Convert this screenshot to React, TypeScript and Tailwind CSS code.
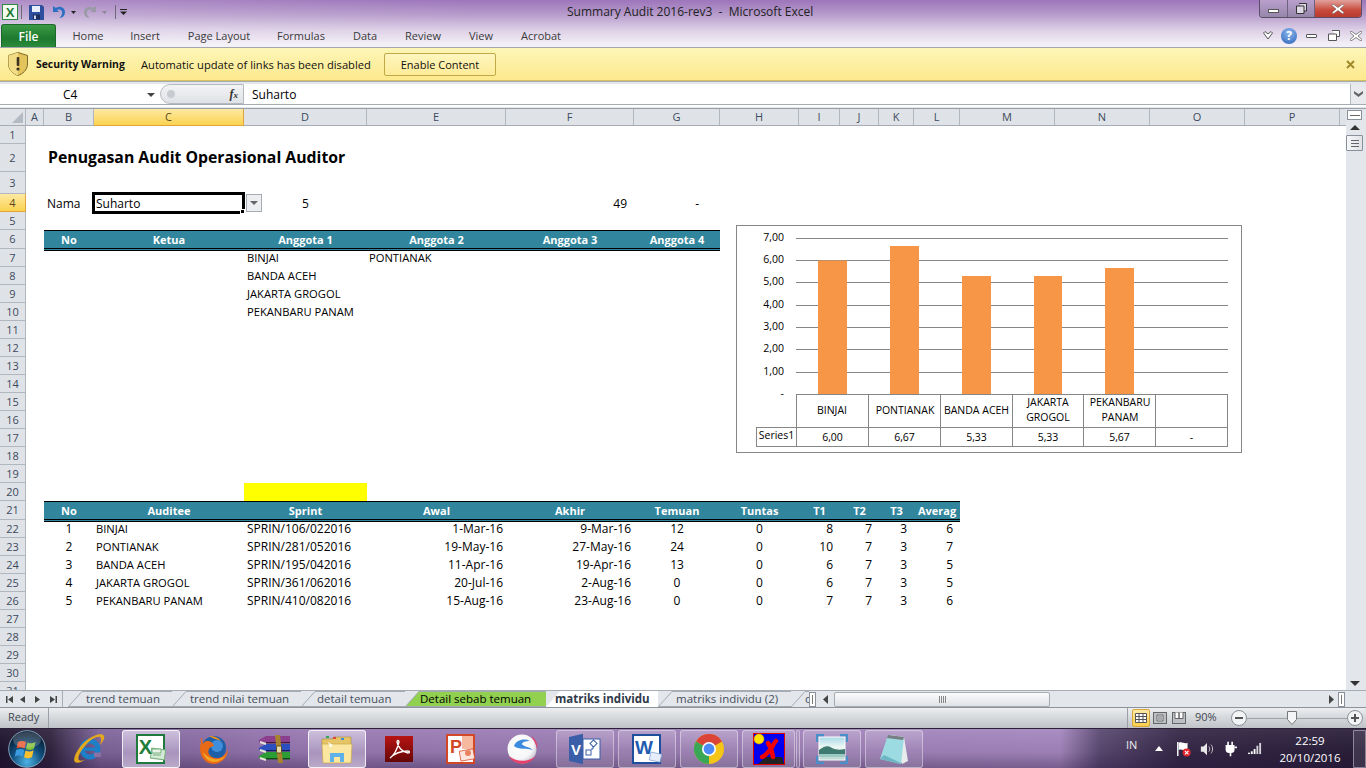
import React from "react";

const COLS = [
  { n: "A", w: "w-[18px]" }, { n: "B", w: "w-[50px]" }, { n: "C", w: "w-[150px]" }, { n: "D", w: "w-[123px]" },
  { n: "E", w: "w-[139px]" }, { n: "F", w: "w-[128px]" }, { n: "G", w: "w-[86px]" }, { n: "H", w: "w-[79px]" },
  { n: "I", w: "w-[41px]" }, { n: "J", w: "w-[39px]" }, { n: "K", w: "w-[35px]" }, { n: "L", w: "w-[46px]" },
  { n: "M", w: "w-[95px]" }, { n: "N", w: "w-[95px]" }, { n: "O", w: "w-[95px]" }, { n: "P", w: "w-[95px]" },
];

type C = { t?: string; a?: "l" | "c" | "r"; x?: string; z?: string };
type R = { n: number; h: string; cells?: Record<string, C>; head?: boolean };

const CAPS = "text-[11.2px]";
const H = (t: string): C => ({ t, a: "c", x: "font-bold text-white", z: "text-[11px]" });
const audit = (
  no: string, name: string, sp: string, aw: string, ak: string, te: string, t1: string, t2: string, t3: string, av: string
): Record<string, C> => ({
  B: { t: no, a: "c" },
  C: { t: name, x: "pl-[2px]", z: CAPS },
  D: { t: sp, x: "pl-[3px]" },
  E: { t: aw, a: "r", x: "pr-[3px]" },
  F: { t: ak, a: "r", x: "pr-[3px]" },
  G: { t: te, a: "c" },
  H: { t: "0", a: "c" },
  I: { t: t1, a: "r", x: "pr-[7px]" },
  J: { t: t2, a: "r", x: "pr-[7px]" },
  K: { t: t3, a: "r", x: "pr-[7px]" },
  L: { t: av, a: "r", x: "pr-[7px]" },
});

const ROWS: R[] = [
  { n: 1, h: "h-[18px]" },
  { n: 2, h: "h-[28px]", cells: { B: { t: "Penugasan Audit Operasional Auditor", x: "pl-[4px] font-bold", z: "text-[15.8px]" } } },
  { n: 3, h: "h-[22px]" },
  { n: 4, h: "h-[18px]", cells: {
    B: { t: "Nama", x: "pl-[3px] pt-px" },
    D: { t: "5", a: "c", x: "pt-px" },
    F: { t: "49", a: "r", x: "pr-[7px] pt-px" },
    G: { t: "-", a: "r", x: "pr-[21px] pt-px" },
  } },
  { n: 5, h: "h-[18px]" },
  { n: 6, h: "h-[19px]", head: true, cells: {
    B: H("No"), C: H("Ketua"), D: H("Anggota 1"), E: H("Anggota 2"), F: H("Anggota 3"), G: H("Anggota 4"),
  } },
  { n: 7, h: "h-[18px]", cells: { D: { t: "BINJAI", x: "pl-[3px] pt-px", z: CAPS }, E: { t: "PONTIANAK", x: "pl-[2px] pt-px", z: CAPS } } },
  { n: 8, h: "h-[18px]", cells: { D: { t: "BANDA ACEH", x: "pl-[3px] pt-px", z: CAPS } } },
  { n: 9, h: "h-[18px]", cells: { D: { t: "JAKARTA GROGOL", x: "pl-[3px] pt-px", z: CAPS } } },
  { n: 10, h: "h-[18px]", cells: { D: { t: "PEKANBARU PANAM", x: "pl-[3px] pt-px", z: CAPS } } },
  ...[11, 12, 13, 14, 15, 16, 17, 18, 19].map((n) => ({ n, h: "h-[18px]" })),
  { n: 20, h: "h-[18px]", cells: { D: { x: "bg-[#ffff00] self-stretch" } } },
  { n: 21, h: "h-[19px]", head: true, cells: {
    B: H("No"), C: H("Auditee"), D: H("Sprint"), E: H("Awal"), F: H("Akhir"), G: H("Temuan"), H: H("Tuntas"),
    I: H("T1"), J: H("T2"), K: H("T3"), L: H("Averag"),
  } },
  { n: 22, h: "h-[18px]", cells: audit("1", "BINJAI", "SPRIN/106/022016", "1-Mar-16", "9-Mar-16", "12", "8", "7", "3", "6") },
  { n: 23, h: "h-[18px]", cells: audit("2", "PONTIANAK", "SPRIN/281/052016", "19-May-16", "27-May-16", "24", "10", "7", "3", "7") },
  { n: 24, h: "h-[18px]", cells: audit("3", "BANDA ACEH", "SPRIN/195/042016", "11-Apr-16", "19-Apr-16", "13", "6", "7", "3", "5") },
  { n: 25, h: "h-[18px]", cells: audit("4", "JAKARTA GROGOL", "SPRIN/361/062016", "20-Jul-16", "2-Aug-16", "0", "6", "7", "3", "5") },
  { n: 26, h: "h-[18px]", cells: audit("5", "PEKANBARU PANAM", "SPRIN/410/082016", "15-Aug-16", "23-Aug-16", "0", "7", "7", "3", "6") },
  ...[27, 28, 29, 30, 31].map((n) => ({ n, h: "h-[18px]" })),
];

function Row({ r }: { r: R }) {
  const sel = r.n === 4;
  return (
    <div className={`flex ${r.h} shrink-0 overflow-visible`}>
      <div
        className={`w-[26px] shrink-0 flex items-center justify-center pt-px border-b border-r text-[11px] ${
          sel
            ? "bg-[linear-gradient(#fde9a4,#fbd350)] border-[#e2a33b] text-[#5a4a20]"
            : "bg-[#dfe3e8] border-[#b1b7bf] text-[#3d4a5c]"
        }`}
      >
        {r.n}
      </div>
      {COLS.map((c) => {
        const cell = r.cells?.[c.n];
        const teal = r.head && cell;
        const align = cell?.a === "c" ? "justify-center" : cell?.a === "r" ? "justify-end" : "justify-start";
        return (
          <div
            key={c.n}
            className={`${c.w} shrink-0 flex ${align} whitespace-nowrap text-black ${cell?.z ?? "text-[12px]"} ${
              teal
                ? "h-[21px] pt-px bg-[#31859c] border-t border-black border-b-[3px] border-b-black border-double items-start relative z-[1] overflow-hidden"
                : "items-center"
            } ${cell?.x ?? ""}`}
          >
            {cell?.t}
          </div>
        );
      })}
    </div>
  );
}

function Chart() {
  const grid = [238.5, 260.5, 282.5, 305.5, 327.5, 349.5, 372.5, 394.5];
  const labels = ["7,00", "6,00", "5,00", "4,00", "3,00", "2,00", "1,00", "-"];
  const bars = [
    [818, 29, 260.5], [890, 29, 246], [962, 29, 276], [1034, 28, 276], [1105, 29, 268],
  ];
  const xs = [796.5, 868.5, 940.5, 1012.5, 1083.5, 1155.5, 1227.5];
  const vals = ["6,00", "6,67", "5,33", "5,33", "5,67", "-"];
  const ff = "'Open Sans', sans-serif";
  return (
    <svg
      className="absolute left-[736px] top-[116px] z-10 bg-white"
      width="506"
      height="228"
      viewBox="736 225 506 228"
      fontFamily={ff}
    >
      <rect x="736.5" y="225.5" width="505" height="227" fill="#fff" stroke="#868686" />
      {grid.map((y) => (
        <line key={y} x1="796" x2="1228" y1={y} y2={y} stroke="#868686" />
      ))}
      {labels.map((l, i) => (
        <text key={l} x="784" y={grid[i] + 2.5} fontSize="10.5" textAnchor="end" fill="#000">
          {l}
        </text>
      ))}
      {bars.map(([x, w, t]) => (
        <rect key={x} x={x} y={t} width={w} height={394 - t} fill="#f79646" />
      ))}
      <g stroke="#868686" fill="none">
        <line x1="796" x2="1228" y1="427.5" y2="427.5" />
        <line x1="796" x2="1228" y1="394.5" y2="394.5" />
        <line x1="757" x2="1228" y1="446.5" y2="446.5" />
        <line x1="757" x2="796" y1="427.5" y2="427.5" />
        <line x1="756.5" x2="756.5" y1="427" y2="447" />
        {xs.map((x) => (
          <line key={x} x1={x} x2={x} y1="394" y2="447" />
        ))}
      </g>
      <g fontSize="10.5" textAnchor="middle" fill="#000">
        <text x="832" y="414">BINJAI</text>
        <text x="905" y="414">PONTIANAK</text>
        <text x="976.5" y="414">BANDA ACEH</text>
        <text x="1048" y="406">JAKARTA</text>
        <text x="1048" y="421">GROGOL</text>
        <text x="1120" y="406">PEKANBARU</text>
        <text x="1120" y="421">PANAM</text>
        <text x="776.5" y="439">Series1</text>
        {vals.map((v, i) => (
          <text key={i} x={(xs[i] + xs[i + 1]) / 2} y="441">
            {v}
          </text>
        ))}
      </g>
    </svg>
  );
}

const Orb = () => (
  <svg width="38" height="38" viewBox="0 0 38 38">
    <defs>
      <radialGradient id="orb" cx="50%" cy="85%" r="75%">
        <stop offset="0" stopColor="#4fb4e6" />
        <stop offset="0.55" stopColor="#10507e" />
        <stop offset="1" stopColor="#071c33" />
      </radialGradient>
    </defs>
    <circle cx="19" cy="19" r="18.3" fill="url(#orb)" stroke="#9fc0d8" strokeWidth="0.8" />
    <path d="M10 12q4-2 8 0l-1.4 6.6q-4-2-8 0z" fill="#e8502a" />
    <path d="M19.5 12.4q4 2 8-.4l-1.5 6.8q-4 2.4-8 .3z" fill="#7fbf35" />
    <path d="M8.2 20q4-2 8 0l-1.4 6.6q-4-2-8 0z" fill="#3b9be0" />
    <path d="M17.6 20.5q4 2 8-.3L24 27q-4 2.3-8 .2z" fill="#fbc02d" />
    <ellipse cx="19" cy="10" rx="14" ry="8" fill="#fff" opacity="0.2" />
  </svg>
);
const IE = () => (
  <svg width="34" height="34" viewBox="0 0 34 34">
    <circle cx="18" cy="17" r="8" fill="none" stroke="#1c7fc8" strokeWidth="5" />
    <rect x="11" y="15.5" width="15" height="3.4" fill="#1c7fc8" />
    <path d="M22 20.5h7v4.500h-7z" fill="#8a70a5" />
    <path d="M3 30C0 27 6 15 15 8 23 2 31 1 32 4c1 2-1 6-4 9 1-3 2-7 0-8-3-1-9 2-14 8C9 18 5 25 7 28c1 1 4 1 7-1-4 3-9 5-11 3z" fill="#e3a81c" />
  </svg>
);
const XL = () => (
  <svg width="30" height="30" viewBox="0 0 30 30">
    <rect x="1" y="1" width="27" height="28" fill="#fff" stroke="#1e7a3c" strokeWidth="2" />
    <rect x="15" y="15" width="14" height="10" fill="#d5ead6" stroke="#7ab07f" strokeWidth="1" transform="rotate(8 22 20)" />
    <text x="9.5" y="20" textAnchor="middle" fontSize="20" fontWeight="700" fill="#1f7d3b" fontFamily="'Liberation Sans',sans-serif">X</text>
    <path d="M16 15h9v4h-9zM17 21h8" stroke="#7ab07f" strokeWidth="1" fill="#e8f3e8" />
  </svg>
);
const FF = () => (
  <svg width="32" height="32" viewBox="0 0 32 32">
    <circle cx="17" cy="15" r="12" fill="#1f5fa8" />
    <circle cx="20" cy="13" r="6" fill="#3e8edb" />
    <path d="M4 10C1 18 5 30 16 31c9 0 15-7 15-15-2 6-7 10-13 9-5-1-8-5-6-9 1-2 3-3 5-3-1-3-3-5-7-5-2 0-3 1-4 3C6 10 5 7 5 5 3 6 4 8 4 10z" fill="#e86a17" />
    <path d="M6 19c1 6 6 10 11 10 5 0 10-3 12-7-3 3-7 5-12 4-5-1-9-4-11-7z" fill="#f6a623" />
    <path d="M12 3c4 0 9 1 12 5-4-2-8-2-12-5z" fill="#f28f1c" />
  </svg>
);
const RAR = () => (
  <svg width="32" height="28" viewBox="0 0 32 28">
    <path d="M0 5l7-4h24v7H7L0 8z" fill="#8c3f8e" />
    <path d="M0 13l7-4h24v7H7l-7-1z" fill="#2b4fc0" />
    <path d="M0 21l7-4h24v7H7l-7-1z" fill="#2c9c34" />
    <path d="M1 7l6 2M1 15l6 2M1 23l6 2" stroke="#e8e4d8" strokeWidth="2" />
    <rect x="7" y="7" width="24" height="1.4" fill="#3e1c40" />
    <rect x="7" y="15" width="24" height="1.4" fill="#10205c" />
    <rect x="7" y="23" width="24" height="1.4" fill="#0e4a14" />
    <path d="M16 0h5l3 28h-5z" fill="#a9822d" />
    <rect x="17.5" y="11" width="5" height="7" rx="1" fill="#e6d9a8" stroke="#4a3a10" strokeWidth="0.8" />
  </svg>
);
const Folder = () => (
  <svg width="32" height="30" viewBox="0 0 32 30">
    <path d="M1 5h10l2-2h17v8H1z" fill="#e7c566" stroke="#a98f3d" strokeWidth="0.6" />
    <rect x="5" y="2" width="3" height="2" fill="#3aa655" />
    <rect x="12" y="3" width="3" height="2" fill="#d9483b" />
    <rect x="20" y="4" width="3" height="2" fill="#3c8ed8" />
    <path d="M1 10h30l-1 19H2z" fill="#fbe7a0" stroke="#c9a94e" strokeWidth="0.7" />
    <path d="M9 28V19h14v9h-4v-5h-6v5z" fill="#5fb1e8" />
    <path d="M7 8l2 6 3-3-5-3z" fill="#fff" opacity="0.8" />
  </svg>
);
const PDF = () => (
  <svg width="28" height="26" viewBox="0 0 28 26">
    <defs>
      <linearGradient id="pdf" x1="0" y1="0" x2="0" y2="1">
        <stop offset="0" stopColor="#b81414" />
        <stop offset="1" stopColor="#650707" />
      </linearGradient>
    </defs>
    <rect width="28" height="26" fill="url(#pdf)" />
    <path d="M5 22c3-2 7-8 9-16 0-2-2-2-2 0 1 5 5 10 11 11 2 0 2-2 0-2-6 0-13 2-18 7z" fill="none" stroke="#fff" strokeWidth="1.3" />
  </svg>
);
const PPT = () => (
  <svg width="30" height="30" viewBox="0 0 30 30">
    <rect x="1" y="1" width="27" height="28" fill="#fff" stroke="#d24726" strokeWidth="2" />
    <rect x="16" y="2" width="11" height="13" fill="#f7b8a0" />
    <text x="10" y="19" textAnchor="middle" fontSize="18" fontWeight="700" fill="#d24726" fontFamily="'Liberation Sans',sans-serif">P</text>
    <rect x="14" y="16" width="14" height="10" fill="#fbe5dc" stroke="#d24726" strokeWidth="0.7" transform="rotate(-10 21 21)" />
    <circle cx="22" cy="19" r="3" fill="#e8825f" />
  </svg>
);
const Sphere = () => (
  <svg width="32" height="32" viewBox="0 0 32 32">
    <defs>
      <radialGradient id="sph" cx="40%" cy="35%" r="65%">
        <stop offset="0" stopColor="#fff" />
        <stop offset="0.75" stopColor="#f6f6f8" />
        <stop offset="1" stopColor="#c8c8d4" />
      </radialGradient>
    </defs>
    <circle cx="15" cy="16" r="14.500" fill="url(#sph)" />
    <path d="M7 13C9 7 17 5 23 8c-4 0-8 1-8 3 0 2 8 3 11 6-5-2-15 0-19-4z" fill="#3d8bdf" />
    <path d="M2 23c5 10 21 11 27-1-5 7-20 8-27 1zM24 3c5 3 7 8 6 13-1-5-3-9-6-13z" fill="#e8406a" />
  </svg>
);
const Visio = () => (
  <svg width="32" height="32" viewBox="0 0 32 32">
    <rect x="14" y="6" width="17" height="20" fill="#fff" stroke="#3a5fa8" />
    <rect x="22" y="8" width="5" height="5" fill="#fff" stroke="#3a5fa8" transform="rotate(45 24.5 10.5)" />
    <rect x="17" y="17" width="5" height="5" fill="#fff" stroke="#3a5fa8" />
    <path d="M24 13v3h-2" stroke="#3a5fa8" fill="none" />
    <path d="M0 4L14 .8V31.200L0 28z" fill="#3a5fa8" />
    <text x="7" y="22" textAnchor="middle" fontSize="15" fontWeight="700" fill="#fff" fontFamily="'Liberation Sans',sans-serif">V</text>
  </svg>
);
const Word = () => (
  <svg width="30" height="30" viewBox="0 0 30 30">
    <rect x="1" y="1" width="27" height="28" fill="#fff" stroke="#1f4f9c" strokeWidth="2" />
    <text x="12" y="20" textAnchor="middle" fontSize="19" fontWeight="700" fill="#1f5bb0" fontFamily="'Liberation Sans',sans-serif">W</text>
    <rect x="18" y="19" width="11" height="8" fill="#e7eef9" stroke="#7fa0d4" strokeWidth="0.7" transform="rotate(12 23 23)" />
  </svg>
);
const Chrome = () => (
  <svg width="30" height="30" viewBox="0 0 30 30">
    <circle cx="15" cy="15" r="15" fill="#f5c518" />
    <path d="M15 15L2 7.5A15 15 0 0 1 28 7.5z" fill="#db4437" />
    <path d="M15 15L2 7.5A15 15 0 0 0 15 30z" fill="#3aa757" />
    <circle cx="15" cy="15" r="7" fill="#fff" />
    <circle cx="15" cy="15" r="5.4" fill="#4c8bf5" />
  </svg>
);
const XApp = () => (
  <svg width="32" height="32" viewBox="0 0 32 32">
    <rect x="0.5" y="0.5" width="31" height="31" fill="#0000f0" stroke="#e00000" />
    <circle cx="6" cy="6" r="5" fill="#ffe400" stroke="#e0a000" strokeWidth="0.5" />
    <path d="M5 31l8-7h16l2 7z" fill="#222" />
    <path d="M9 24c4-1 6-6 9-8 2-4 3-6 5-8M15 10c2 3 4 7 5 14" stroke="#f00000" strokeWidth="4.5" fill="none" strokeLinecap="round" />
  </svg>
);
const Photo = () => (
  <svg width="32" height="30" viewBox="0 0 32 30">
    <defs>
      <linearGradient id="ph" x1="0" y1="0" x2="0" y2="1">
        <stop offset="0" stopColor="#a9d9e8" />
        <stop offset="0.45" stopColor="#eef8f4" />
        <stop offset="1" stopColor="#b6d7cf" />
      </linearGradient>
    </defs>
    <rect x="3" y="3" width="26" height="23" fill="url(#ph)" stroke="#fff" />
    <path d="M3 16c5-4 9-5 13-2 4 2 8 2 13 1v5c-8 2-18 2-26 0z" fill="#3f7a70" />
    <path d="M3 20h26v3H3z" fill="#9cc9c2" />
    <path d="M1 8V1h7M24 1h7v7M31 22v7h-7M8 29H1v-7" stroke="#4a90c8" strokeWidth="2.400" fill="none" />
  </svg>
);
const Note = () => (
  <svg width="32" height="32" viewBox="0 0 32 32">
    <path d="M12 2l14 2 4 24-6 3z" fill="#e8ebec" />
    <path d="M10 2l16 2-3 27L2 26z" fill="#9ddbe2" />
    <path d="M10 2l16 2-1 3L9 5z" fill="#777d82" />
    <path d="M6 22l17 8-.5 1L2 26z" fill="#6fb6c4" />
  </svg>
);

function TB({ active, w = "w-[58px]", children }: { active?: boolean; w?: string; children?: React.ReactNode }) {
  return (
    <div
      className={`${w} h-[38px] shrink-0 rounded-[3px] flex items-center justify-center border ${
        active
          ? "border-white/80 bg-[linear-gradient(#cdbfdc,#a994bd_60%,#b9a9c9)]"
          : "border-white/40 bg-[linear-gradient(rgba(255,255,255,0.22),rgba(255,255,255,0.05)_55%,rgba(255,255,255,0.14))]"
      }`}
    >
      {children}
    </div>
  );
}
const Slot = ({ w = "w-[58px]", children }: { w?: string; children?: React.ReactNode }) => (
  <div className={`${w} h-[38px] shrink-0 flex items-center justify-center`}>{children}</div>
);

function Taskbar() {
  return (
    <div className="h-[40px] shrink-0 flex items-center border-t border-[#2a2138] text-white bg-[linear-gradient(rgba(255,255,255,0.06),rgba(0,0,0,0.06)_60%,rgba(30,15,50,0.35)),linear-gradient(90deg,#1e152e_0,#30233f_50px,#7f659b_100px,#9878b2_300px,#9d7fb6_600px,#a587bf_1060px,#5b4972_1100px,#352848_1180px,#2a1f3a_100%)]">
      <div className="w-[60px] shrink-0 flex items-center pl-[8px]"><Orb /></div>
      <div className="flex items-center gap-[4px]">
        <Slot><IE /></Slot>
        <TB active><XL /></TB>
        <Slot><FF /></Slot>
        <Slot><RAR /></Slot>
        <TB active><Folder /></TB>
        <Slot><PDF /></Slot>
        <Slot><PPT /></Slot>
        <Slot><Sphere /></Slot>
        <TB><Visio /></TB>
        <TB><Word /></TB>
        <TB><Chrome /></TB>
        <TB w="w-[53px]"><XApp /></TB>
      </div>
      <div className="w-[4px] h-[38px] ml-[1px] mr-[3px] shrink-0 rounded-[2px] border border-white/40 bg-white/10" />
      <div className="flex items-center gap-[4px]">
        <TB><Photo /></TB>
        <TB><Note /></TB>
      </div>
      <div className="w-[203px] shrink-0" />
      <span className="w-[29px] shrink-0 text-[11px] text-white/90 -mt-[6px]">IN</span>
      <svg className="shrink-0" width="8" height="5" viewBox="0 0 8 5"><path d="M4 0l4 5H0z" fill="#fff" /></svg>
      <svg className="ml-[13px] shrink-0" width="16" height="16" viewBox="0 0 18 18">
        <path d="M2 1v16" stroke="#fff" strokeWidth="1.6" />
        <path d="M3 2c4-2 6 2 10 0v8c-4 2-6-2-10 0z" fill="#fff" />
        <circle cx="12" cy="13" r="4.5" fill="#e0242c" />
        <path d="M10 11l4 4M14 11l-4 4" stroke="#fff" strokeWidth="1.2" />
      </svg>
      <svg className="ml-[8px] shrink-0" width="14" height="14" viewBox="0 0 16 16">
        <path d="M1 5h3l4-4v14l-4-4H1z" fill="#e8e8e8" />
        <path d="M10 5c1.5 1.5 1.5 4.5 0 6M12.5 3c2.5 2.500 2.500 7.500 0 10" stroke="#ddd" fill="none" />
      </svg>
      <svg className="ml-[10px] shrink-0" width="13" height="16" viewBox="0 0 16 18">
        <path d="M2 4h11v6c0 3-2 4-4 4H6c-2 0-4-1-4-4z" fill="#fff" />
        <path d="M5 0v4M10 0v4M8 14v4" stroke="#fff" strokeWidth="2" />
        <path d="M13 7h3" stroke="#fff" strokeWidth="2" />
      </svg>
      <svg className="ml-[11px] shrink-0" width="15" height="13" viewBox="0 0 16 14" fill="#fff">
        <rect x="0" y="11.500" width="2" height="1.500" />
        <rect x="3" y="10" width="2" height="3" />
        <rect x="6" y="7.500" width="2" height="5.500" />
        <rect x="9" y="4" width="2" height="9" opacity="0.8" />
        <rect x="12" y="1" width="2" height="12" opacity="0.8" />
      </svg>
      <div className="w-[72px] ml-[11px] shrink-0 flex flex-col items-center text-[11.5px] leading-[17px] text-white">
        <span>22:59</span>
        <span>20/10/2016</span>
      </div>
      <div className="ml-auto w-[13px] h-[38px] border border-white/40 bg-white/10 rounded-[1px]" />
    </div>
  );
}

const Tabs = [
  { t: "trend temuan", w: "w-[104px]", sw: 104, tx: "pl-[18px]" },
  { t: "trend nilai temuan", w: "w-[129px]", sw: 129, tx: "pl-[18px]" },
  { t: "detail temuan", w: "w-[104px]", sw: 104, tx: "pl-[16px]" },
  { t: "Detail sebab temuan", w: "w-[141px]", sw: 141, tx: "pl-[15px]", green: true },
  { t: "matriks individu", w: "w-[112px]", sw: 112, tx: "pl-[9px]", active: true },
  { t: "matriks individu (2)", w: "w-[133px]", sw: 133, tx: "pl-[18px]" },
];

function SheetTab({ tab }: { tab: (typeof Tabs)[number] }) {
  const h = 16;
  const fill = tab.green ? "#92d050" : tab.active ? "#ffffff" : "#e3e6ea";
  return (
    <div className={`${tab.w} h-[16px] shrink-0 relative flex items-center overflow-hidden`}>
      <svg className="absolute left-0 top-0" width={tab.sw} height={h}>
        <polygon points={`0,${h} 14,0 ${tab.sw},0 ${tab.sw},${h}`} fill={fill} />
        <polyline points={`0,${h} 14,0.5 ${tab.sw},0.5`} fill="none" stroke={tab.active ? "none" : "#a5abb3"} />
        {!tab.active && <line x1="0" x2={tab.sw} y1="15.500" y2="15.500" stroke="#a5abb3" />}
      </svg>
      <span
        className={`relative whitespace-nowrap text-[11.5px] ${tab.tx} ${
          tab.green ? "text-black" : tab.active ? "font-bold text-[#2f3a4a]" : "text-[#45505e]"
        }`}
      >
        {tab.t}
      </span>
    </div>
  );
}

function App() {
  const ribbon = [
    ["Home", "w-[60px]"], ["Insert", "w-[54px]"], ["Page Layout", "w-[94px]"], ["Formulas", "w-[70px]"],
    ["Data", "w-[58px]"], ["Review", "w-[58px]"], ["View", "w-[58px]"], ["Acrobat", "w-[62px]"],
  ];
  return (
    <div className="w-[1366px] h-[768px] overflow-hidden flex flex-col bg-white font-['Open_Sans',sans-serif] relative">
      {/* title + ribbon tabs */}
      <div className="h-[48px] shrink-0 flex flex-col bg-[linear-gradient(90deg,rgba(255,255,255,0.18),rgba(255,255,255,0)_35%),linear-gradient(#9d75bb,#b69bcb_30%,#dccfe6_62%,#f3eff6_92%)]">
        <div className="h-[24px] flex items-center relative">
          <svg className="ml-[2px]" width="16" height="16" viewBox="0 0 16 16">
            <rect x="0.5" y="0.5" width="15" height="15" fill="#f2fbf0" stroke="#2d8a3e" />
            <text x="8" y="13" textAnchor="middle" fontSize="13" fontWeight="700" fill="#1d7a35" fontFamily="'Liberation Sans',sans-serif">X</text>
          </svg>
          <div className="w-px h-[14px] bg-[#6f6a78] ml-[3px]" />
          <svg className="ml-[7px]" width="15" height="15" viewBox="0 0 15 15">
            <path d="M0 0h13l2 2v13H0z" fill="#2e4f9e" />
            <rect x="3" y="1" width="8" height="6" fill="#e8eefa" />
            <rect x="4" y="9.500" width="7" height="5" fill="#1d2d5c" />
            <rect x="5" y="10.500" width="2" height="3.500" fill="#d0d8ea" />
          </svg>
          <svg className="ml-[8px]" width="14" height="14" viewBox="0 0 14 14">
            <path d="M1 1v6h6L5 5c3-1.500 6 .5 5 4-.3 1.500-1.500 3-3 4 4 0 6-3 6-6 0-4-5-7-9-4z" fill="#2d6fc4" />
          </svg>
          <svg className="ml-[5px]" width="5" height="3" viewBox="0 0 5 3"><path d="M0 0h5L2.500 3z" fill="#222" /></svg>
          <svg className="ml-[8px]" width="13" height="14" viewBox="0 0 13 14">
            <path d="M12 1v6H6l2-2C5 3.500 2 5.500 3 9c.3 1.500 1.500 3 3 4-4 0-6-3-6-6 0-4 5-7 9-4z" fill="#9a9aa6" />
          </svg>
          <svg className="ml-[5px]" width="5" height="3" viewBox="0 0 5 3"><path d="M0 0h5L2.500 3z" fill="#8c8796" /></svg>
          <div className="w-px h-[14px] bg-[#6f6a78] ml-[8px]" />
          <svg className="ml-[4px]" width="7" height="6" viewBox="0 0 7 6"><path d="M0 0h7v1H0zM0 2.500h7L3.500 6z" fill="#222" /></svg>
          <span className="absolute left-[567px] top-[3px] text-[12px] text-[#222] whitespace-nowrap">
            Summary Audit 2016-rev3&nbsp; -&nbsp; Microsoft Excel
          </span>
          <div className="ml-auto mr-[4px] self-start flex h-[18px] border border-t-0 border-[#5b4f68] rounded-b-[4px] overflow-hidden">
            <div className="w-[28px] flex items-center justify-center border-r border-[#6e6280] bg-[linear-gradient(#b9a0cc,#9686aa)]">
              <div className="w-[11px] h-[4px] bg-white border border-[#555] mt-[4px]" />
            </div>
            <div className="w-[27px] flex items-center justify-center border-r border-[#6e6280] bg-[linear-gradient(#b9a0cc,#9686aa)]">
              <svg width="11" height="11" viewBox="0 0 11 11"><path d="M3 .5h7.500v7.500H8M.5 3h7.500v7.500H.5z" fill="#dfd8e6" stroke="#333" /></svg>
            </div>
            <div className="w-[46px] flex items-center justify-center bg-[linear-gradient(#e2a29c,#c84a3c_60%,#b93a2e)]">
              <svg width="12" height="10" viewBox="0 0 12 10"><path d="M1 0l5 3.500L11 0l1 1.500L8 5l4 3.500L11 10 6 6.500 1 10 0 8.500 4 5 0 1.500z" fill="#fff" stroke="#555" strokeWidth="0.5" /></svg>
            </div>
          </div>
        </div>
        <div className="h-[24px] flex items-stretch border-b border-[#a3a8b0]">
          <div className="ml-[1px] w-[55px] shrink-0 rounded-t-[3px] flex items-center justify-center pt-px text-white text-[12px] font-semibold bg-[linear-gradient(#3c9a46,#1e7a2e_60%,#2a8a3a)] border border-b-0 border-[#1c6a2a]">
            File
          </div>
          <div className="w-[2px] shrink-0" />
          {ribbon.map(([t, w]) => (
            <div key={t} className={`${w} shrink-0 flex items-center justify-center pt-px text-[11px] text-[#3b3b3b]`}>
              {t}
            </div>
          ))}
          <div className="ml-auto flex items-center pr-[4px]">
            <svg width="10" height="9" viewBox="0 0 10 9"><path d="M.5 2L2 .5 5 3 8 .5 9.500 2 5 8z" fill="#fff" stroke="#555" /></svg>
            <div className="ml-[8px] w-[16px] h-[16px] rounded-full bg-[radial-gradient(circle_at_50%_30%,#8db8ee,#2a62b8)] flex items-center justify-center text-white text-[12px] font-bold leading-none">?</div>
            <div className="ml-[9px] w-[11px] h-[4px] bg-white border border-[#555] rounded-[1px]" />
            <svg className="ml-[11px]" width="12" height="11" viewBox="0 0 12 11"><path d="M4 .5h7.500v6H9M.5 4h8v6.500h-8z" fill="#fff" stroke="#555" /></svg>
            <svg className="ml-[10px]" width="12" height="10" viewBox="0 0 12 10"><path d="M1 0l5 3.500L11 0l1 1.500L8 5l4 3.500L11 10 6 6.500 1 10 0 8.500 4 5 0 1.500z" fill="#fff" stroke="#555" strokeWidth="0.7" /></svg>
          </div>
        </div>
      </div>

      {/* message bar */}
      <div className="h-[33px] shrink-0 flex items-center bg-[linear-gradient(#fdf6b8,#fde98d)] border-b border-[#d7c05e]">
        <svg className="ml-[8px]" width="20" height="24" viewBox="0 0 20 24">
          <path d="M10 .5L19.500 3.500V12c0 6-5 10-9.500 11.500C5.500 22 .5 18 .5 12V3.500z" fill="#e3c45c" stroke="#7d6a2a" />
          <path d="M10 .5V23.500C5.500 22 .5 18 .5 12V3.500z" fill="#f3dc86" />
          <rect x="8.700" y="5" width="2.600" height="9" rx="1" fill="#3c3420" />
          <circle cx="10" cy="17" r="1.600" fill="#3c3420" />
        </svg>
        <span className="ml-[8px] w-[105px] shrink-0 pt-[2px] font-bold text-[10.4px] text-[#111] whitespace-nowrap">Security Warning</span>
        <span className="text-[11.15px] pt-[2px] w-[243px] shrink-0 text-[#111] whitespace-nowrap">Automatic update of links has been disabled</span>
        <div className="w-[112px] h-[23px] shrink-0 rounded-[2px] border border-[#c2a948] bg-[linear-gradient(#fef6bf,#fdeb98)] flex items-center justify-center pt-[2px] text-[11px] text-[#111]">
          Enable Content
        </div>
        <svg className="ml-auto mr-[11px]" width="9" height="9" viewBox="0 0 9 9"><path d="M1 1l7 7M8 1L1 8" stroke="#a08a2c" strokeWidth="2" /></svg>
      </div>

      {/* formula bar */}
      <div className="h-[27px] shrink-0 bg-[#e3e6ea] flex flex-col border-t border-[#a6acb3]">
        <div className="h-[21px] mt-[2px] bg-white flex items-stretch border-b border-[#a6acb3]">
          <div className="w-[158px] shrink-0 flex items-center relative pt-px text-[12px] text-black">
            <span className="ml-[63px]">C4</span>
            <svg className="absolute right-[3px] top-[9px]" width="8" height="4" viewBox="0 0 8 4"><path d="M0 0h8L4 4z" fill="#444" /></svg>
          </div>
          <div className="w-[84px] ml-[2px] shrink-0 rounded-l-full bg-[linear-gradient(#f2f3f5,#dfe2e6)] border border-[#b5bac1] flex items-center justify-between pl-[6px] pr-[5px]">
            <div className="w-[8px] h-[8px] rounded-full bg-[#c8ccd2]" />
            <span className="font-['Liberation_Serif',serif] italic font-bold text-[12px] text-[#333]">f<span className="text-[9px]">x</span></span>
          </div>
          <div className="flex-1 flex items-center pl-[8px] pt-px text-[12px] text-black">Suharto</div>
          <div className="w-[16px] shrink-0 border-l border-[#b5bac1] bg-[#e8eaee] flex items-center justify-center">
            <svg width="9" height="6" viewBox="0 0 9 6"><path d="M0 0l4.500 3L9 0v2.500L4.500 6 0 2.500z" fill="#666" /></svg>
          </div>
        </div>
        <div className="h-[2px] bg-white" />
      </div>

      {/* sheet and vertical scrollbar */}
      <div className="h-[582px] shrink-0 flex bg-white relative">
        <div className="w-[1346px] shrink-0 flex flex-col overflow-hidden relative border-t border-[#9aa0a8]">
          <div className="flex h-[17px] shrink-0 bg-[#dfe3e8] border-b border-[#a6acb3] text-[11px] text-[#3d4a5c]">
            <div className="w-[26px] shrink-0 border-r border-[#b1b7bf] flex items-end justify-end p-[2px]">
              <svg width="11" height="11" viewBox="0 0 11 11"><path d="M11 0v11H0z" fill="#b4bac2" /></svg>
            </div>
            {COLS.map((c) => (
              <div
                key={c.n}
                className={`${c.w} shrink-0 flex items-center justify-center pt-px border-r ${
                  c.n === "C"
                    ? "bg-[linear-gradient(#fde9a4,#fbd350)] border-[#e2a33b] border-b text-[#5a4a20] -mb-px"
                    : "border-[#b1b7bf]"
                }`}
              >
                {c.n}
              </div>
            ))}
            <div className="w-[6px] shrink-0" />
          </div>
          {ROWS.map((r) => (
            <Row key={r.n} r={r} />
          ))}
          {/* active cell */}
          <div className="absolute left-[92px] top-[83px] w-[153px] h-[22px] border-[3px] border-black z-20 flex items-center pl-[1px] pt-px text-[12px] text-black bg-white">
            Suharto
            <div className="absolute -right-[3px] -bottom-[3px] w-[5px] h-[5px] bg-black border border-white" />
          </div>
          <div className="absolute left-[246px] top-[85px] w-[16px] h-[18px] z-20 bg-[#eceef1] border border-[#a6acb3] flex items-center justify-center">
            <svg width="8" height="4" viewBox="0 0 8 4"><path d="M0 0h8L4 4z" fill="#666" /></svg>
          </div>
          <Chart />
        </div>
        <div className="w-[20px] shrink-0 flex flex-col bg-[#e3e6ea] border-t border-[#9aa0a8] pr-[3px]">
          <div className="h-[10px] mt-[1px] mx-[1px] bg-white border border-[#8a9099] flex items-center justify-center shrink-0">
            <div className="w-[10px] h-px bg-[#666]" />
          </div>
          <div className="h-[15px] flex items-center justify-center shrink-0">
            <svg width="10" height="5" viewBox="0 0 10 5"><path d="M5 0l5 5H0z" fill="#333" /></svg>
          </div>
          <div className="h-[16px] bg-[linear-gradient(90deg,#f6f7f8,#dfe2e6)] border border-[#8a9099] rounded-[1px] flex flex-col items-center justify-center gap-[2px] shrink-0">
            <div className="w-[8px] h-px bg-[#666]" />
            <div className="w-[8px] h-px bg-[#666]" />
            <div className="w-[8px] h-px bg-[#666]" />
          </div>
          <div className="flex-1" />
          <div className="h-[14px] flex items-center justify-center shrink-0">
            <svg width="10" height="5" viewBox="0 0 10 5"><path d="M0 0h10L5 5z" fill="#333" /></svg>
          </div>
        </div>
      </div>

      {/* sheet tabs */}
      <div className="h-[17px] shrink-0 flex items-center bg-[#e3e6ea] border-t border-[#a6acb3] relative">
        <div className="w-[63px] shrink-0 flex items-center gap-[7px] pl-[6px] border-r border-[#a6acb3] h-full">
          <svg width="7" height="7" viewBox="0 0 7 7"><path d="M0 0h1.500v7H0zM7 0v7L2 3.500z" fill="#444" /></svg>
          <svg width="5" height="7" viewBox="0 0 5 7"><path d="M5 0v7L0 3.500z" fill="#444" /></svg>
          <svg className="ml-[3px]" width="5" height="7" viewBox="0 0 5 7"><path d="M0 0v7l5-3.500z" fill="#444" /></svg>
          <svg className="ml-[3px]" width="7" height="7" viewBox="0 0 7 7"><path d="M5.500 0H7v7H5.500zM0 0v7l5-3.500z" fill="#444" /></svg>
        </div>
        <div className="w-[5px] shrink-0" />
        {Tabs.map((t) => (
          <SheetTab key={t.t} tab={t} />
        ))}
        <div className="w-[18px] shrink-0 relative h-[16px] overflow-hidden flex items-center">
          <svg className="absolute left-0 top-0" width="18" height="16"><polyline points="0,16 14,0.500 18,0.500" fill="none" stroke="#a5abb3" /></svg>
          <span className="ml-[14px] text-[11.5px] text-[#45505e]">d</span>
        </div>
        <div className="w-[7px] h-[15px] shrink-0 bg-white border border-[#8a9099] flex items-center justify-center">
          <div className="w-px h-[9px] bg-[#777]" />
        </div>
        <div className="w-[18px] shrink-0 flex items-center justify-center">
          <svg width="5" height="9" viewBox="0 0 5 9"><path d="M5 0v9L0 4.500z" fill="#444" /></svg>
        </div>
        <div className="w-[216px] h-[15px] shrink-0 rounded-[2px] border border-[#a6acb3] bg-[linear-gradient(#fafbfb,#dfe2e6)] flex items-center justify-center gap-[1px]">
          <div className="w-px h-[7px] bg-[#888]" /><div className="w-px h-[7px] bg-[#888]" /><div className="w-px h-[7px] bg-[#888]" /><div className="w-px h-[7px] bg-[#888]" />
        </div>
        <div className="flex-1" />
        <svg className="mr-[4px]" width="5" height="9" viewBox="0 0 5 9"><path d="M0 0v9l5-4.500z" fill="#444" /></svg>
        <div className="w-[7px] h-[15px] shrink-0 bg-white border border-[#8a9099] flex items-center justify-center mr-[21px]">
          <div className="w-px h-[9px] bg-[#777]" />
        </div>
      </div>

      {/* status bar */}
      <div className="h-[21px] shrink-0 flex items-center border-t border-[#8d939b] bg-[linear-gradient(#eceef0,#d7dadd_45%,#bfc2c7)] text-[11px] text-[#3f4650]">
        <span className="ml-[8px] w-[40px] pb-px">Ready</span>
        <div className="w-px h-full bg-[#9aa0a8]" />
        <div className="ml-auto w-px h-full bg-[#9aa0a8] mr-[4px]" />
        <div className="w-[18px] h-[18px] rounded-[2px] bg-[linear-gradient(#fde9a4,#fbcf4e)] border border-[#d9a63c] flex items-center justify-center">
          <svg width="12" height="10" viewBox="0 0 12 10"><path d="M.5.5h11v9H.5zM.5 3.500h11M.5 6.500h11M4 .5v9M8 .5v9" fill="#fff" stroke="#555" /></svg>
        </div>
        <svg className="ml-[3px]" width="14" height="12" viewBox="0 0 14 12"><rect x=".5" y=".5" width="13" height="11" fill="#bcc0c5" stroke="#666" /><path d="M4 3h6v6H4zM5 5h4M5 7h4" fill="#eee" stroke="#666" /></svg>
        <svg className="ml-[5px]" width="14" height="12" viewBox="0 0 14 12"><rect x=".5" y=".5" width="13" height="11" fill="#bcc0c5" stroke="#666" /><path d="M3 .5v6h4v-6M7 .5v6h4v-6" fill="#fff" stroke="#666" /></svg>
        <span className="ml-[9px] w-[36px] text-[11px] pb-px">90%</span>
        <div className="w-[16px] h-[16px] rounded-full bg-[#f2f3f4] border border-[#8a9099] flex items-center justify-center">
          <div className="w-[8px] h-[2px] bg-[#555]" />
        </div>
        <div className="w-[100px] h-[16px] relative flex items-center">
          <div className="w-full h-px bg-[#9ea3aa]" />
          <svg className="absolute left-[40px] top-[1px]" width="10" height="14" viewBox="0 0 10 14"><path d="M.5.500h9v8L5 13.500.5 8.500z" fill="#f4f5f6" stroke="#777" /></svg>
        </div>
        <div className="w-[16px] h-[16px] rounded-full bg-[#f2f3f4] border border-[#8a9099] flex items-center justify-center relative mr-[3px]">
          <div className="w-[8px] h-[2px] bg-[#555]" />
          <div className="absolute w-[2px] h-[8px] bg-[#555]" />
        </div>
      </div>

      <Taskbar />
    </div>
  );
}

export default App;
